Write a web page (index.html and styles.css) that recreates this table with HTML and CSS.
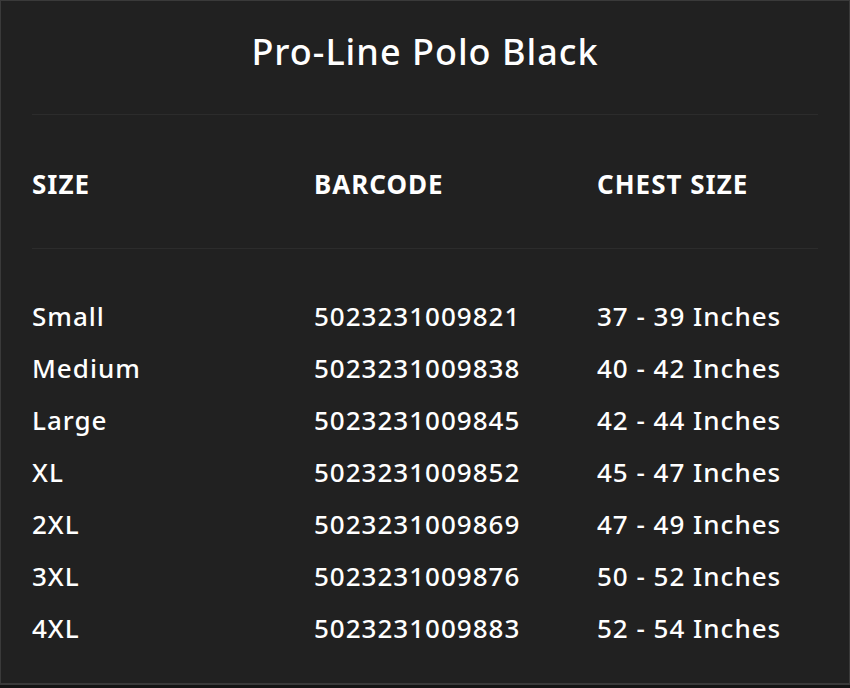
FILE: index.html
```html
<!DOCTYPE html>
<html>
<head>
<meta charset="utf-8">
<link rel="stylesheet" href="styles.css">
</head>
<body>
<div class="panel">
  <h1 class="title">Pro-Line Polo Black</h1>
  <div class="rule"></div>
  <div class="grid head">
    <div>SIZE</div><div>BARCODE</div><div>CHEST SIZE</div>
  </div>
  <div class="rule"></div>
  <div class="rows">
    <div class="grid row"><div>Small</div><div>5023231009821</div><div>37 - 39 Inches</div></div>
    <div class="grid row"><div>Medium</div><div>5023231009838</div><div>40 - 42 Inches</div></div>
    <div class="grid row"><div>Large</div><div>5023231009845</div><div>42 - 44 Inches</div></div>
    <div class="grid row"><div>XL</div><div>5023231009852</div><div>45 - 47 Inches</div></div>
    <div class="grid row"><div>2XL</div><div>5023231009869</div><div>47 - 49 Inches</div></div>
    <div class="grid row"><div>3XL</div><div>5023231009876</div><div>50 - 52 Inches</div></div>
    <div class="grid row"><div>4XL</div><div>5023231009883</div><div>52 - 54 Inches</div></div>
  </div>
</div>
</body>
</html>
```

FILE: styles.css
```css
html, body {
  margin: 0;
  padding: 0;
  background: #141414;
}
body {
  width: 850px;
  height: 688px;
  overflow: hidden;
  font-family: "Noto Sans", "DejaVu Sans", sans-serif;
  color: #ffffff;
}
.panel {
  box-sizing: border-box;
  width: 850px;
  height: 685px;
  background: #212121;
  border: 1px solid #3a3a3a;
  border-bottom: 2px solid #3a3a3a;
  padding: 0 31px;
}
.title {
  margin: 0;
  height: 113px;
  box-sizing: border-box;
  padding-top: 28px;
  text-align: center;
  font-size: 36px;
  font-weight: 500;
  letter-spacing: 1px;
  line-height: 46px;
}
.rule {
  height: 1px;
  background: #2c2c2c;
}
.grid {
  display: grid;
  grid-template-columns: 282px 283px 1fr;
}
.head {
  height: 133px;
  box-sizing: border-box;
  padding-top: 51px;
  font-size: 26px;
  font-weight: 700;
  letter-spacing: 1px;
  line-height: 36px;
}
.rows {
  padding-top: 41px;
}
.row {
  height: 52px;
  font-size: 26px;
  font-weight: 500;
  letter-spacing: 1px;
  line-height: 52px;
}
```
